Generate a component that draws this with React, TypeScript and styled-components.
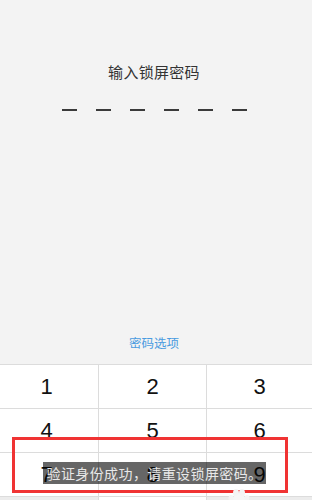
import React from "react";
import styled, { createGlobalStyle } from "styled-components";

const Global = createGlobalStyle`
  html, body { margin: 0; padding: 0; background: #f3f3f3; }
  body { font-family: "Noto Sans CJK SC", "Liberation Sans", sans-serif; }
  #root { width: 312px; height: 500px; overflow: hidden; }
`;

const Screen = styled.div`
  position: relative;
  width: 312px;
  height: 500px;
  background: #f3f3f3;
  display: flex;
  flex-direction: column;
  overflow: hidden;
`;

const Top = styled.div`
  height: 364px;
  flex-shrink: 0;
  display: flex;
  flex-direction: column;
  align-items: center;
`;

const Title = styled.div`
  margin-top: 62px;
  font-size: 15px;
  line-height: 20px;
  color: #333;
  letter-spacing: 0.3px;
  padding-right: 4px;
`;

const Dashes = styled.div`
  margin-top: 27px;
  display: flex;
  gap: 19px;
  padding-right: 3px;
`;

const Dash = styled.span`
  width: 15px;
  height: 2px;
  background: #3a3a3a;
`;

const Options = styled.div`
  margin-top: auto;
  margin-bottom: 13px;
  padding-right: 4px;
  font-size: 12.5px;
  line-height: 16px;
  color: #4a9be0;
`;

const Pad = styled.div`
  flex-shrink: 0;
  display: grid;
  grid-template-columns: 99px 108px 105px;
  border-top: 1px solid #dcdcdc;
  background: #fff;
`;

const Key = styled.div<{ $first?: boolean; $last?: boolean; $gray?: boolean }>`
  height: 43px;
  border-bottom: 1px solid #dcdcdc;
  border-right: ${(p) => (p.$last ? "none" : "1px solid #dcdcdc")};
  background: ${(p) => (p.$gray ? "#ececec" : "#fff")};
  display: flex;
  align-items: center;
  justify-content: center;
  padding-right: ${(p) => (p.$first ? "5px" : "0")};
  font-family: "Liberation Sans", "Noto Sans", sans-serif;
  font-size: 22px;
  color: #111;
`;

const Toast = styled.div`
  position: absolute;
  left: 43px;
  top: 462px;
  width: 223px;
  height: 22px;
  background: rgba(0, 0, 0, 0.6);
  color: #e8e8e8;
  font-size: 14px;
  line-height: 22px;
  letter-spacing: 0.4px;
  text-align: center;
  white-space: nowrap;
`;

const Marker = styled.div`
  position: absolute;
  left: 12px;
  top: 437px;
  width: 276px;
  height: 56px;
  box-sizing: border-box;
  border: 3px solid #f03333;
`;

const Paw = styled.svg`
  position: absolute;
  left: 228px;
  top: 488px;
`;

const keys = ["1", "2", "3", "4", "5", "6", "7", "8", "9", "", "", ""];

export default function App() {
  return (
    <Screen>
      <Global />
      <Top>
        <Title>输入锁屏密码</Title>
        <Dashes>
          {Array.from({ length: 6 }).map((_, i) => (
            <Dash key={i} />
          ))}
        </Dashes>
        <Options>密码选项</Options>
      </Top>
      <Pad>
        {keys.map((k, i) => (
          <Key
            key={i}
            $first={i % 3 === 0}
            $last={i % 3 === 2}
            $gray={i >= 9 && i !== 10}
          >
            {k}
          </Key>
        ))}
      </Pad>
      <Toast>验证身份成功，请重设锁屏密码。</Toast>
      <Marker />
      <Paw width="24" height="12" viewBox="0 0 24 12">
        <ellipse cx="8" cy="5" rx="3" ry="4" fill="#f4f4f4" />
        <ellipse cx="14" cy="5" rx="3" ry="4" fill="#f4f4f4" />
        <ellipse cx="11" cy="11" rx="7" ry="4" fill="#f6f6f6" />
        <ellipse cx="3" cy="10" rx="2.5" ry="3" fill="#f4f4f4" />
        <ellipse cx="19" cy="10" rx="2.5" ry="3" fill="#f4f4f4" />
      </Paw>
    </Screen>
  );
}
